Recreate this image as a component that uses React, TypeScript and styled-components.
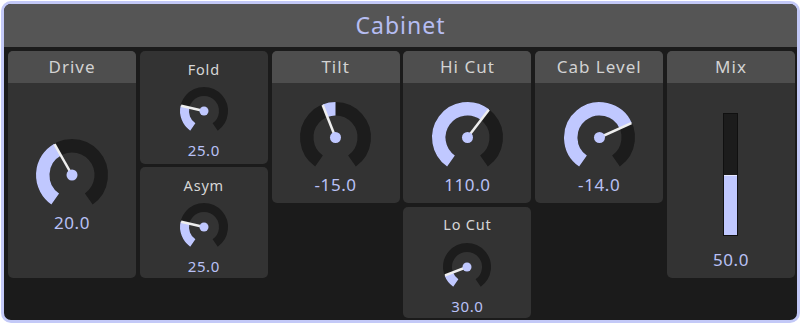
import React from "react";
import styled, { createGlobalStyle } from "styled-components";

const Global = createGlobalStyle`
  html, body { margin: 0; padding: 0; background: #ffffff; }
  * { box-sizing: border-box; }
`;

const ACCENT = "#c0c8ff";
const TRACK = "#1c1c1c";

const Frame = styled.div`
  margin: 1px 0 0 1px;
  width: 799px;
  height: 322px;
  border: 3px solid #c3c9f7;
  border-radius: 10px;
  background: #1b1b1b;
  overflow: hidden;
  display: flex;
  flex-direction: column;
  font-family: "Noto Sans", "Open Sans", sans-serif;
`;

const TitleBar = styled.div`
  height: 43px;
  background: #555555;
  color: #b6bdf2;
  font-size: 23px;
  letter-spacing: 1px;
  display: flex;
  align-items: center;
  justify-content: center;
  padding-bottom: 2px;
`;

const Body = styled.div`
  display: grid;
  grid-template-columns: repeat(6, 128px);
  column-gap: 3.8px;
  padding: 4px 0 0 4px;
  align-items: start;
`;

const Column = styled.div`
  display: flex;
  flex-direction: column;
  gap: 3.6px;
`;

const Card = styled.div<{ $h: number }>`
  height: ${(p) => p.$h}px;
  background: #333333;
  border-radius: 5px;
  overflow: hidden;
  display: flex;
  flex-direction: column;
  align-items: center;
`;

const Header = styled.div`
  width: 100%;
  height: 32px;
  background: #4e4e4e;
  color: #d2d2d2;
  font-size: 17px;
  letter-spacing: 1px;
  display: flex;
  align-items: center;
  justify-content: center;
  padding-bottom: 1px;
`;

const SmallTitle = styled.div`
  margin-top: 8.5px;
  height: 18px;
  line-height: 18px;
  color: #d6d6d6;
  font-size: 14.5px;
  letter-spacing: 0.8px;
`;

const KnobWrap = styled.div<{ $top: number }>`
  margin-top: ${(p) => p.$top}px;
  display: flex;
`;

const Value = styled.div<{ $small?: boolean; $top: number }>`
  margin-top: ${(p) => p.$top}px;
  color: #b9c1f6;
  font-size: ${(p) => (p.$small ? 15 : 17)}px;
  line-height: ${(p) => (p.$small ? 16 : 18)}px;
  letter-spacing: 0.6px;
`;

const SliderTrack = styled.div`
  margin-top: 30px;
  width: 15px;
  height: 123px;
  background: ${TRACK};
  border: 1.5px solid #101010;
  display: flex;
  flex-direction: column;
  justify-content: flex-end;
`;

const SliderFill = styled.div`
  width: 100%;
  background: ${ACCENT};
  border-top: 1.5px solid #e6e8ff;
`;

function pt(cx: number, cy: number, r: number, a: number) {
  const rad = (a * Math.PI) / 180;
  return [cx + r * Math.sin(rad), cy - r * Math.cos(rad)];
}

function arc(cx: number, cy: number, r: number, a0: number, a1: number) {
  const [x0, y0] = pt(cx, cy, r, a0);
  const [x1, y1] = pt(cx, cy, r, a1);
  const large = Math.abs(a1 - a0) > 180 ? 1 : 0;
  const sweep = a1 > a0 ? 1 : 0;
  return `M ${x0} ${y0} A ${r} ${r} 0 ${large} ${sweep} ${x1} ${y1}`;
}

const SPAN = 145;

function Knob({
  R,
  thick,
  angle,
  from = -SPAN,
  dot,
}: {
  R: number;
  thick: number;
  angle: number;
  from?: number;
  dot: number;
}) {
  const size = R * 2 + 4;
  const c = size / 2;
  const rm = R - thick / 2;
  const [px, py] = pt(c, c, R - 0.5, angle);
  return (
    <svg width={size} height={size} viewBox={`0 0 ${size} ${size}`}>
      <path d={arc(c, c, rm, -SPAN, SPAN)} stroke={TRACK} strokeWidth={thick} fill="none" />
      {Math.abs(angle - from) > 0.1 && (
        <path
          d={arc(c, c, rm, Math.min(from, angle), Math.max(from, angle))}
          stroke={ACCENT}
          strokeWidth={thick}
          fill="none"
        />
      )}
      <line x1={c} y1={c} x2={px} y2={py} stroke="#eeeeee" strokeWidth={2.5} />
      <circle cx={c} cy={c} r={dot} fill={ACCENT} />
    </svg>
  );
}

function BigCard({
  label,
  value,
  angle,
  from,
  h,
  knobTop,
  R = 35.5,
}: {
  label: string;
  value: string;
  angle: number;
  from?: number;
  h: number;
  knobTop: number;
  R?: number;
}) {
  return (
    <Card $h={h}>
      <Header>{label}</Header>
      <KnobWrap $top={knobTop}>
        <Knob R={R} thick={13.5} angle={angle} from={from} dot={5.5} />
      </KnobWrap>
      <Value $top={0.5}>{value}</Value>
    </Card>
  );
}

function SmallCard({ label, value, angle, h }: { label: string; value: string; angle: number; h: number }) {
  return (
    <Card $h={h}>
      <SmallTitle>{label}</SmallTitle>
      <KnobWrap $top={7.5}>
        <Knob R={24} thick={9} angle={angle} dot={4.5} />
      </KnobWrap>
      <Value $small $top={5}>{value}</Value>
    </Card>
  );
}

export default function App() {
  return (
    <>
      <Global />
      <Frame>
        <TitleBar>Cabinet</TitleBar>
        <Body>
          <Column>
            <BigCard label="Drive" value="20.0" angle={-29.5} h={227} knobTop={54} R={36} />
          </Column>
          <Column>
            <SmallCard label="Fold" value="25.0" angle={-77} h={112.5} />
            <SmallCard label="Asym" value="25.0" angle={-77} h={111} />
          </Column>
          <Column>
            <BigCard label="Tilt" value="-15.0" angle={-21.5} from={0} h={152} knobTop={17} />
          </Column>
          <Column>
            <BigCard label="Hi Cut" value="110.0" angle={37.6} h={152} knobTop={17} />
            <SmallCard label="Lo Cut" value="30.0" angle={-110.7} h={111} />
          </Column>
          <Column>
            <BigCard label="Cab Level" value="-14.0" angle={65.7} h={152} knobTop={17} />
          </Column>
          <Column>
            <Card $h={227}>
              <Header>Mix</Header>
              <SliderTrack>
                <SliderFill style={{ height: "50%" }} />
              </SliderTrack>
              <Value $top={15}>50.0</Value>
            </Card>
          </Column>
        </Body>
      </Frame>
    </>
  );
}
